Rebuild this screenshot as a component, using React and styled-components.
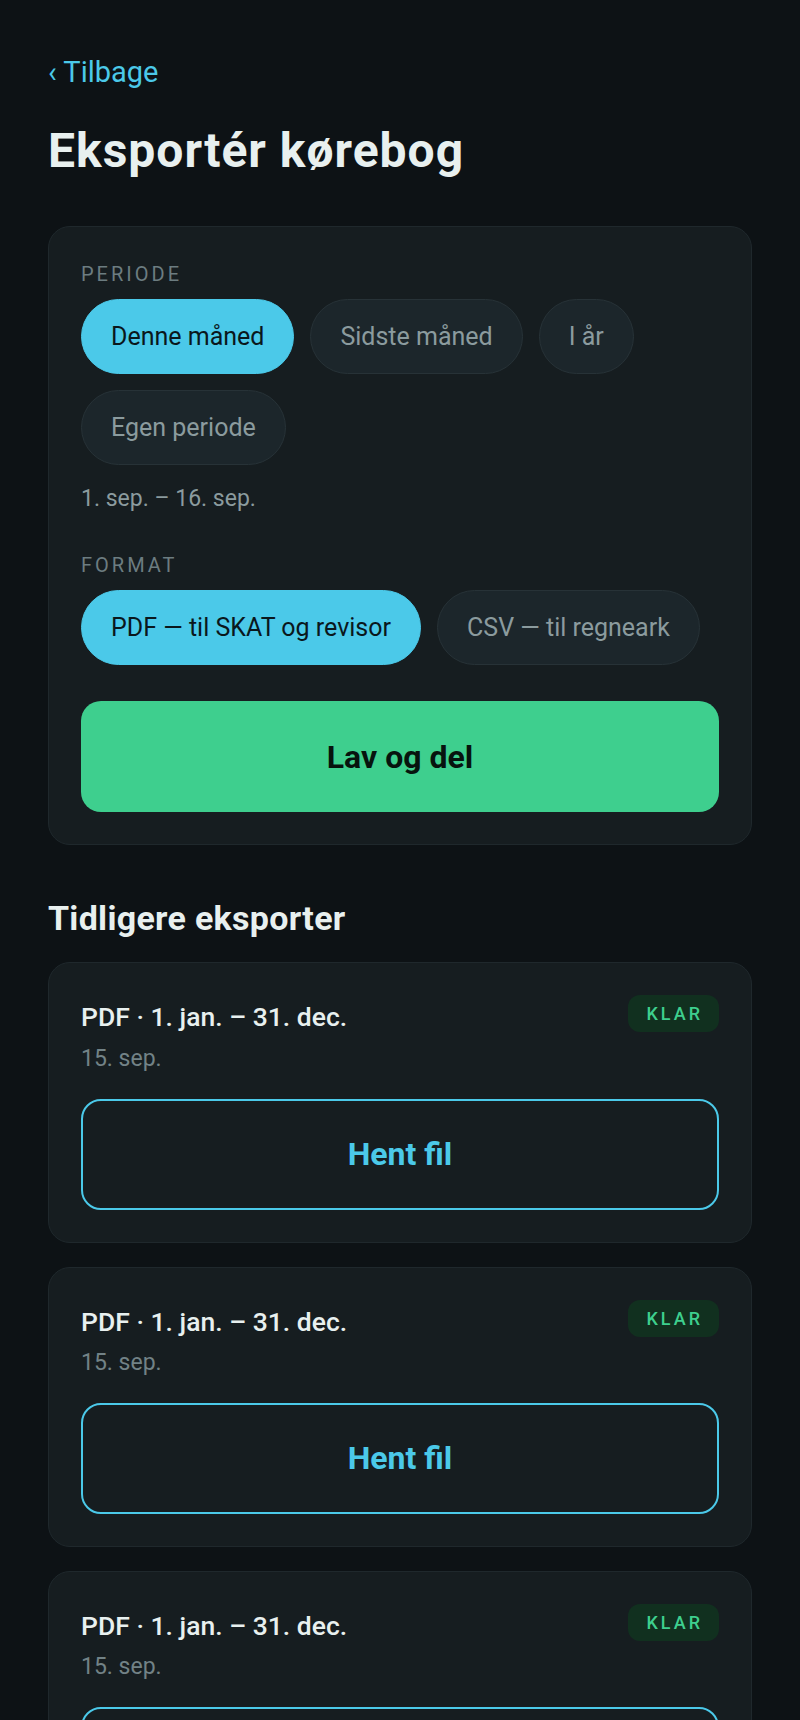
import React from 'react';
import styled, { createGlobalStyle } from 'styled-components';

const colors = {
  bg: '#0d1215',
  card: '#161d20',
  cardBorder: '#1f282c',
  chip: '#1c262b',
  chipBorder: '#273237',
  cyan: '#4bc9e9',
  green: '#3ecf8e',
  badgeBg: '#11301f',
  text: '#e8f0ef',
  muted: '#8b9b9e',
  faint: '#6c7c80',
  dark: '#0a171c',
};

const GlobalStyle = createGlobalStyle`
  * {
    box-sizing: border-box;
  }
  body {
    margin: 0;
    background: ${colors.bg};
    font-family: Roboto, "Liberation Sans", sans-serif;
    color: ${colors.text};
  }
`;

const Page = styled.div`
  min-height: 1720px;
  padding: 54px 48px 48px;
  background: ${colors.bg};
`;

const BackLink = styled.a`
  display: inline-block;
  font-size: 29px;
  line-height: 1.3;
  color: ${colors.cyan};
  text-decoration: none;
`;

const Title = styled.h1`
  margin: 30px 0 47px;
  font-size: 48px;
  line-height: 1.2;
  font-weight: 700;
  letter-spacing: 1px;
  color: ${colors.text};
`;

const Card = styled.div`
  background: ${colors.card};
  border: 1px solid ${colors.cardBorder};
  border-radius: 22px;
  padding: 32px;
`;

const Label = styled.div`
  font-size: 20px;
  line-height: 1.5;
  letter-spacing: 3px;
  text-transform: uppercase;
  color: ${colors.faint};
  margin-top: ${props => props.$top || 0}px;
  margin-bottom: 10px;
`;

const ChipRow = styled.div`
  display: flex;
  flex-wrap: wrap;
  gap: 16px 16px;
`;

const Chip = styled.button`
  display: inline-flex;
  align-items: center;
  height: 75px;
  padding: 0 29px;
  border-radius: 999px;
  font-family: inherit;
  font-size: 25px;
  background: ${props => (props.$active ? colors.cyan : colors.chip)};
  border: 1px solid ${props => (props.$active ? colors.cyan : colors.chipBorder)};
  color: ${props => (props.$active ? colors.dark : colors.muted)};
  cursor: pointer;
`;

const RangeText = styled.div`
  margin-top: 18px;
  font-size: 23px;
  line-height: 1.4;
  color: ${colors.muted};
`;

const PrimaryButton = styled.button`
  display: block;
  width: 100%;
  height: 111px;
  margin-top: 36px;
  border: none;
  border-radius: 20px;
  background: ${colors.green};
  color: #07140e;
  font-family: inherit;
  font-size: 32px;
  font-weight: 700;
  cursor: pointer;
`;

const SectionTitle = styled.h2`
  margin: 53px 0 23px;
  font-size: 34px;
  line-height: 1.2;
  font-weight: 700;
  letter-spacing: 0.3px;
  color: ${colors.text};
`;

const ExportList = styled.div`
  display: flex;
  flex-direction: column;
  gap: 24px;
`;

const ExportHeader = styled.div`
  display: flex;
  justify-content: space-between;
  align-items: flex-start;
`;

const ExportInfo = styled.div`
  padding-top: 5px;
`;

const ExportName = styled.div`
  font-size: 26.5px;
  line-height: 1.3;
  font-weight: 500;
  color: ${colors.text};
`;

const ExportDate = styled.div`
  margin-top: 9px;
  font-size: 23px;
  line-height: 1.3;
  color: #728286;
`;

const Badge = styled.span`
  display: inline-flex;
  align-items: center;
  height: 37px;
  padding: 0 16px 0 18px;
  border-radius: 12px;
  background: ${colors.badgeBg};
  color: ${colors.green};
  font-size: 18px;
  letter-spacing: 3px;
  font-weight: 500;
`;

const OutlineButton = styled.button`
  display: block;
  width: 100%;
  height: 111px;
  margin-top: 25px;
  border: 2px solid ${colors.cyan};
  border-radius: 20px;
  background: transparent;
  color: ${colors.cyan};
  font-family: inherit;
  font-size: 32px;
  font-weight: 700;
  cursor: pointer;
`;

const periods = ['Denne måned', 'Sidste måned', 'I år', 'Egen periode'];
const formats = ['PDF — til SKAT og revisor', 'CSV — til regneark'];

const exportsList = [
  { id: 1, name: 'PDF · 1. jan. – 31. dec.', date: '15. sep.' },
  { id: 2, name: 'PDF · 1. jan. – 31. dec.', date: '15. sep.' },
  { id: 3, name: 'PDF · 1. jan. – 31. dec.', date: '15. sep.' },
];

function ExportItem({ item }) {
  return (
    <Card>
      <ExportHeader>
        <ExportInfo>
          <ExportName>{item.name}</ExportName>
          <ExportDate>{item.date}</ExportDate>
        </ExportInfo>
        <Badge>KLAR</Badge>
      </ExportHeader>
      <OutlineButton>Hent fil</OutlineButton>
    </Card>
  );
}

export default function App() {
  return (
    <>
      <GlobalStyle />
      <Page>
        <BackLink href="#">‹ Tilbage</BackLink>
        <Title>Eksportér kørebog</Title>

        <Card>
          <Label>Periode</Label>
          <ChipRow>
            {periods.map((p, i) => (
              <Chip key={p} $active={i === 0}>{p}</Chip>
            ))}
          </ChipRow>
          <RangeText>1. sep. – 16. sep.</RangeText>

          <Label $top={35}>Format</Label>
          <ChipRow>
            {formats.map((f, i) => (
              <Chip key={f} $active={i === 0}>{f}</Chip>
            ))}
          </ChipRow>
          <PrimaryButton>Lav og del</PrimaryButton>
        </Card>

        <SectionTitle>Tidligere eksporter</SectionTitle>
        <ExportList>
          {exportsList.map(item => (
            <ExportItem key={item.id} item={item} />
          ))}
        </ExportList>
      </Page>
    </>
  );
}
